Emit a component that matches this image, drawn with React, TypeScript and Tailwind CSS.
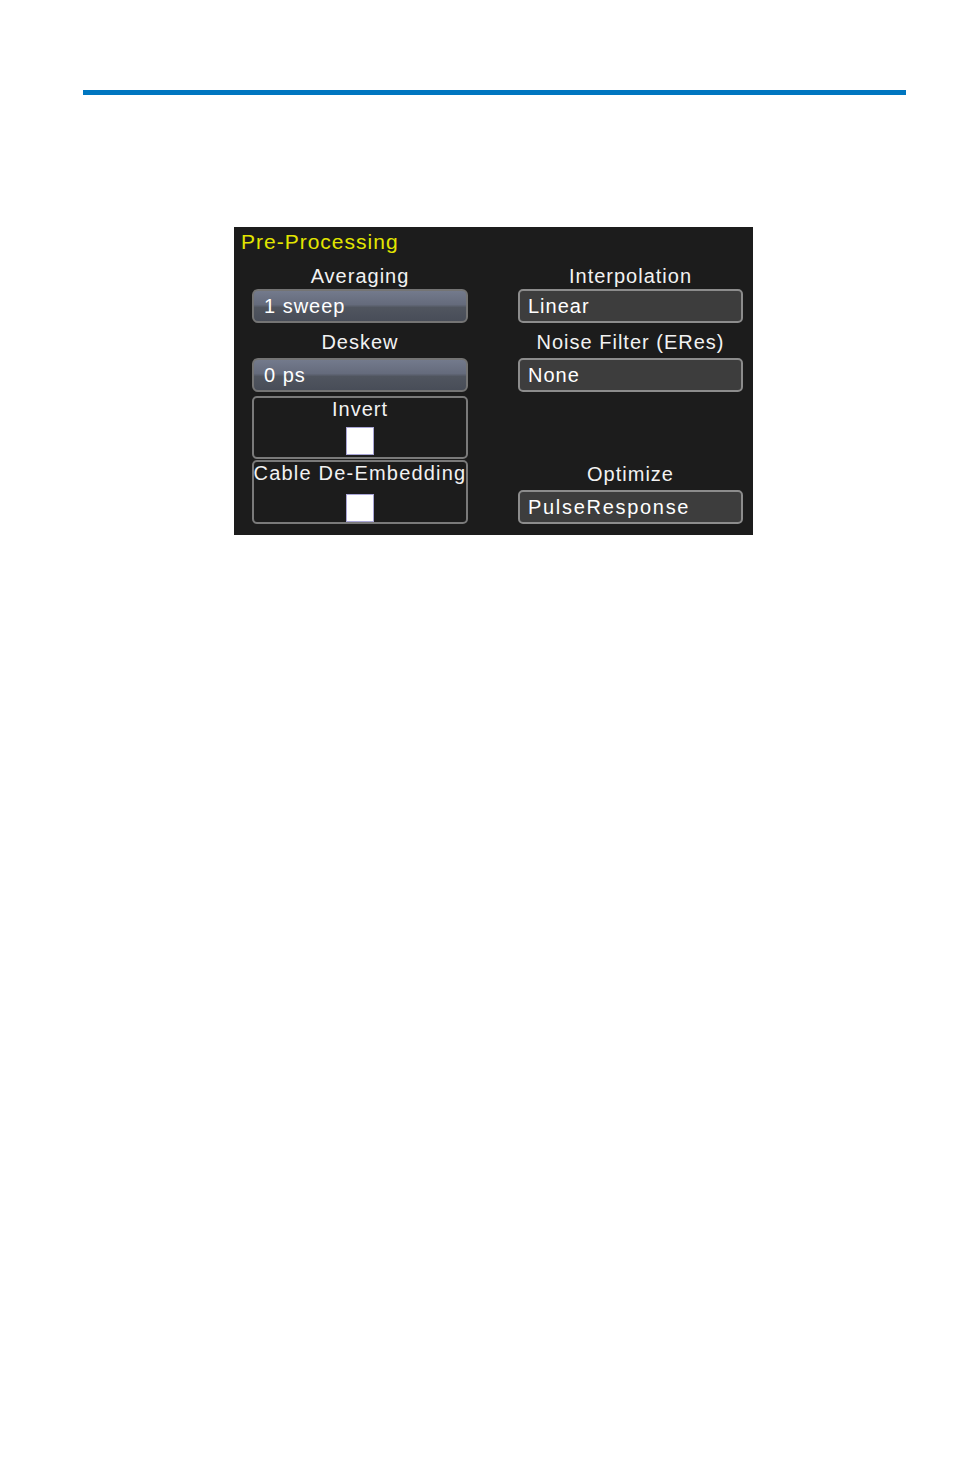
const font = { fontFamily: '"Liberation Sans", Arial, sans-serif' }

function Label({ text, className = "" }: { text: string; className?: string }) {
  return (
    <div className={`text-center text-[20px] text-[#f2f2f2] whitespace-nowrap ${className}`}>{text}</div>
  )
}

function GlossButton({ value }: { value: string }) {
  return (
    <div className="h-[34px] flex items-center pl-[10px] rounded-[6px] border-2 border-[#747474] bg-[linear-gradient(to_bottom,#737a8c_0%,#656b7c_45%,#50555f_55%,#484d58_100%)] text-[20px] tracking-[1px] text-white">
      {value}
    </div>
  )
}

function FlatButton({ value, wide = false }: { value: string; wide?: boolean }) {
  return (
    <div
      className={`h-[34px] flex items-center pl-[8px] rounded-[5px] border-2 border-[#8c8c8c] bg-[#3d3d3d] text-[20px] text-white ${
        wide ? "tracking-[1.7px]" : "tracking-[1px]"
      }`}
    >
      {value}
    </div>
  )
}

function Checkbox() {
  return <div className="w-[28px] h-[28px] bg-white border border-[#a9a6d6]" />
}

export default function App() {
  return (
    <div className="min-h-screen bg-white" style={font}>
      <div className="pt-[90px] pl-[83px] w-[906px]">
        <div className="h-[5px] bg-[#0076c0]" />
      </div>

      <div className="mt-[132px] ml-[234px] w-[519px] h-[308px] bg-[#1c1c1c] pt-[3px] pl-[7px]">
        <div className="text-[21px] leading-[24px] tracking-[1px] text-[#e2e600]">Pre-Processing</div>

        <div className="mt-[9px] ml-[11px] grid grid-cols-[216px_225px] gap-x-[50px]">
          {/* left column */}
          <div className="flex flex-col">
            <Label text="Averaging" className="leading-[26px] tracking-[1px]" />
            <GlossButton value="1 sweep" />
            <Label text="Deskew" className="pt-[3px] leading-[32px] tracking-[1px]" />
            <GlossButton value="0 ps" />

            <div className="mt-[4px] h-[63px] rounded-[5px] border-2 border-[#7a7a7a] flex flex-col items-center">
              <Label text="Invert" className="leading-[24px] -mt-[1px] tracking-[1px]" />
              <div className="mt-[6px]">
                <Checkbox />
              </div>
            </div>

            <div className="mt-[1px] h-[64px] rounded-[5px] border-2 border-[#7a7a7a] flex flex-col items-center">
              <Label text="Cable De-Embedding" className="leading-[22px] tracking-[1.2px] -mx-[4px]" />
              <div className="mt-[10px]">
                <Checkbox />
              </div>
            </div>
          </div>

          {/* right column */}
          <div className="flex flex-col">
            <Label text="Interpolation" className="leading-[26px] tracking-[1px]" />
            <FlatButton value="Linear" />
            <Label text="Noise Filter (ERes)" className="pt-[3px] leading-[32px] tracking-[1px]" />
            <FlatButton value="None" />
            <Label text="Optimize" className="mt-[69px] leading-[26px] tracking-[1px]" />
            <div className="mt-[3px]">
              <FlatButton value="PulseResponse" wide />
            </div>
          </div>
        </div>
      </div>
    </div>
  )
}
